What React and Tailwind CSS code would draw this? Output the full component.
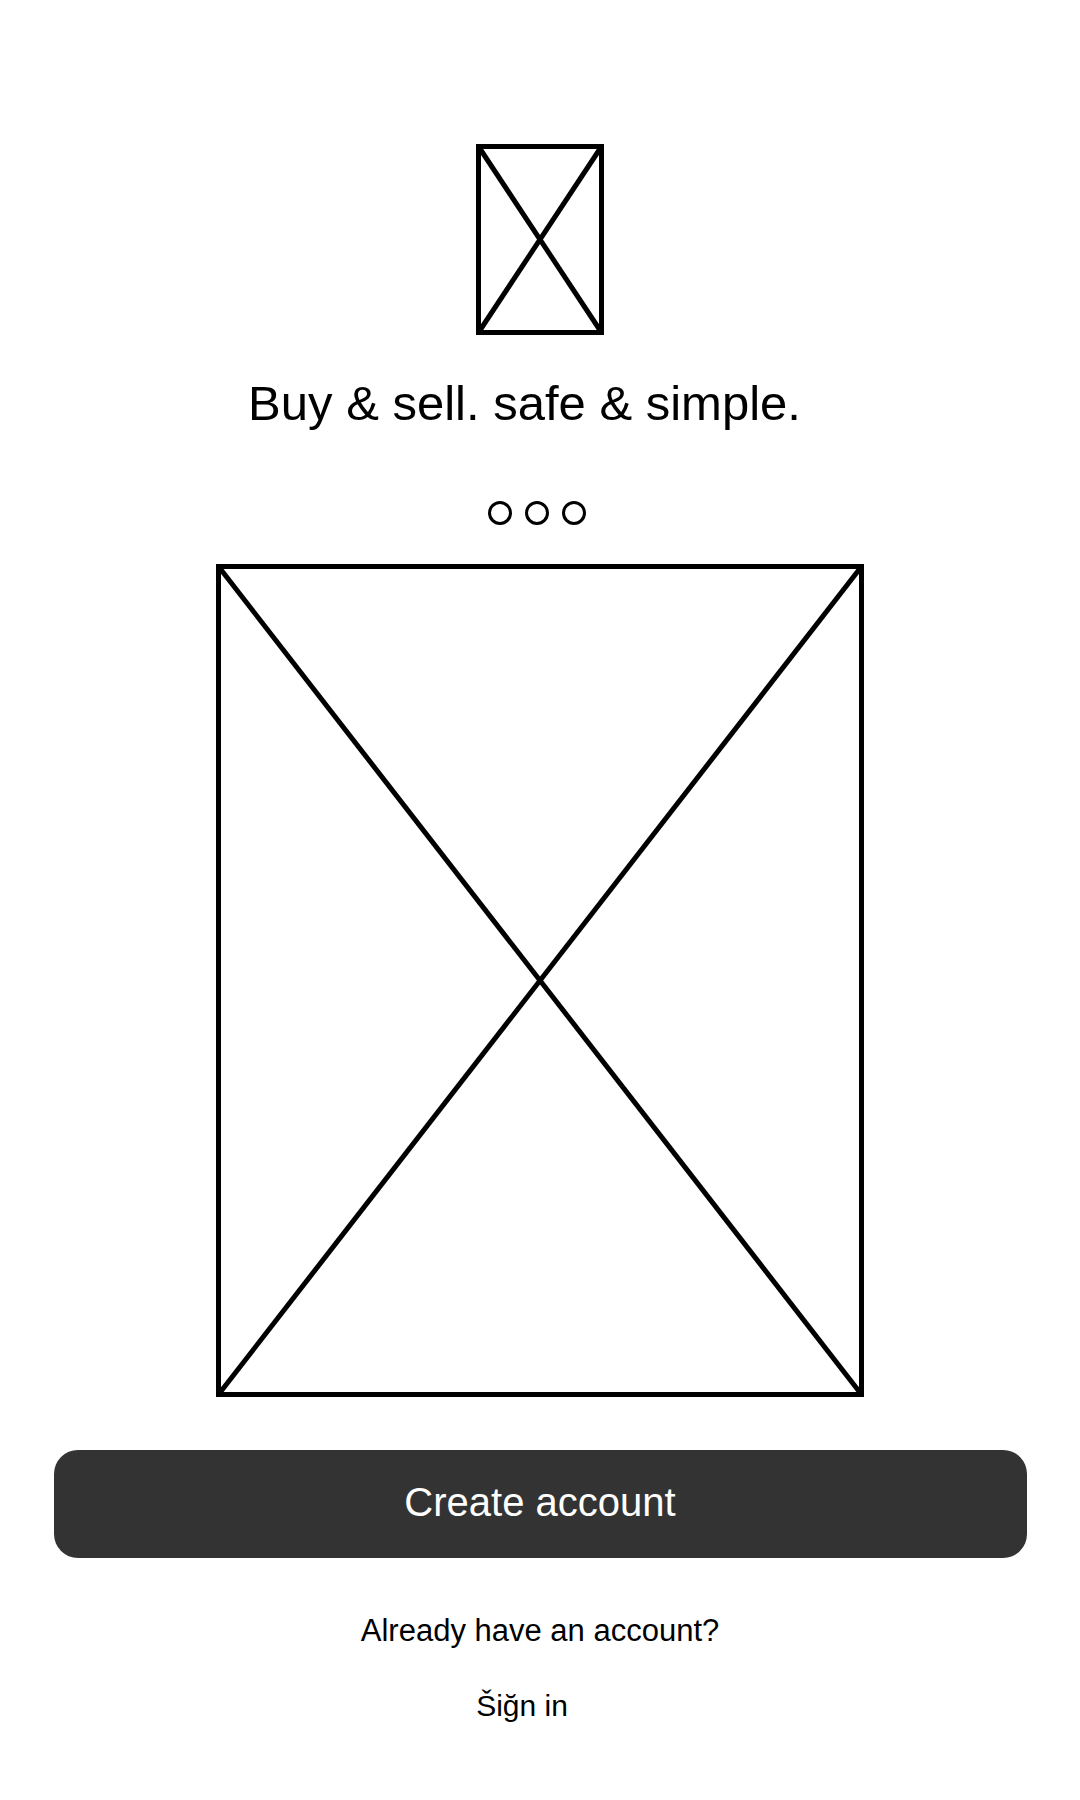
import React from 'react'

function Placeholder({ w, h, stroke = 5 }) {
    const s = stroke / 2
    return (
        <svg width={w} height={h} viewBox={`0 0 ${w} ${h}`} className="block shrink-0">
            <rect x={s} y={s} width={w - stroke} height={h - stroke} fill="none" stroke="#000" strokeWidth={stroke} />
            <line x1={s} y1={s} x2={w - s} y2={h - s} stroke="#000" strokeWidth={stroke} />
            <line x1={w - s} y1={s} x2={s} y2={h - s} stroke="#000" strokeWidth={stroke} />
        </svg>
    )
}

export default function App() {
    return (
        <div className="w-[1080px] h-[1800px] bg-white flex flex-col items-center pt-[144px] font-['Liberation_Sans',Arial,sans-serif] text-black">
            <Placeholder w={128} h={191} />

            <h1 className="mt-[44px] pr-[31px] text-[49px] leading-none font-normal">
                Buy &amp; sell. safe &amp; simple.
            </h1>

            <div className="mt-[73px] pr-[7px] flex gap-[13px]">
                <span className="w-[24px] h-[24px] rounded-full border-[3px] border-black" />
                <span className="w-[24px] h-[24px] rounded-full border-[3px] border-black" />
                <span className="w-[24px] h-[24px] rounded-full border-[3px] border-black" />
            </div>

            <div className="mt-[39px]">
                <Placeholder w={648} h={833} />
            </div>

            <button className="mt-[53px] w-[973px] h-[108px] rounded-[24px] bg-[#333333] text-white text-[40px] leading-none flex items-center justify-center pb-1">
                Create account
            </button>

            <p className="mt-[57px] text-[31px] leading-none">Already have an account?</p>

            <p className="mt-[45px] pr-[36px] text-[30px] leading-none">Šiğn in</p>
        </div>
    )
}
